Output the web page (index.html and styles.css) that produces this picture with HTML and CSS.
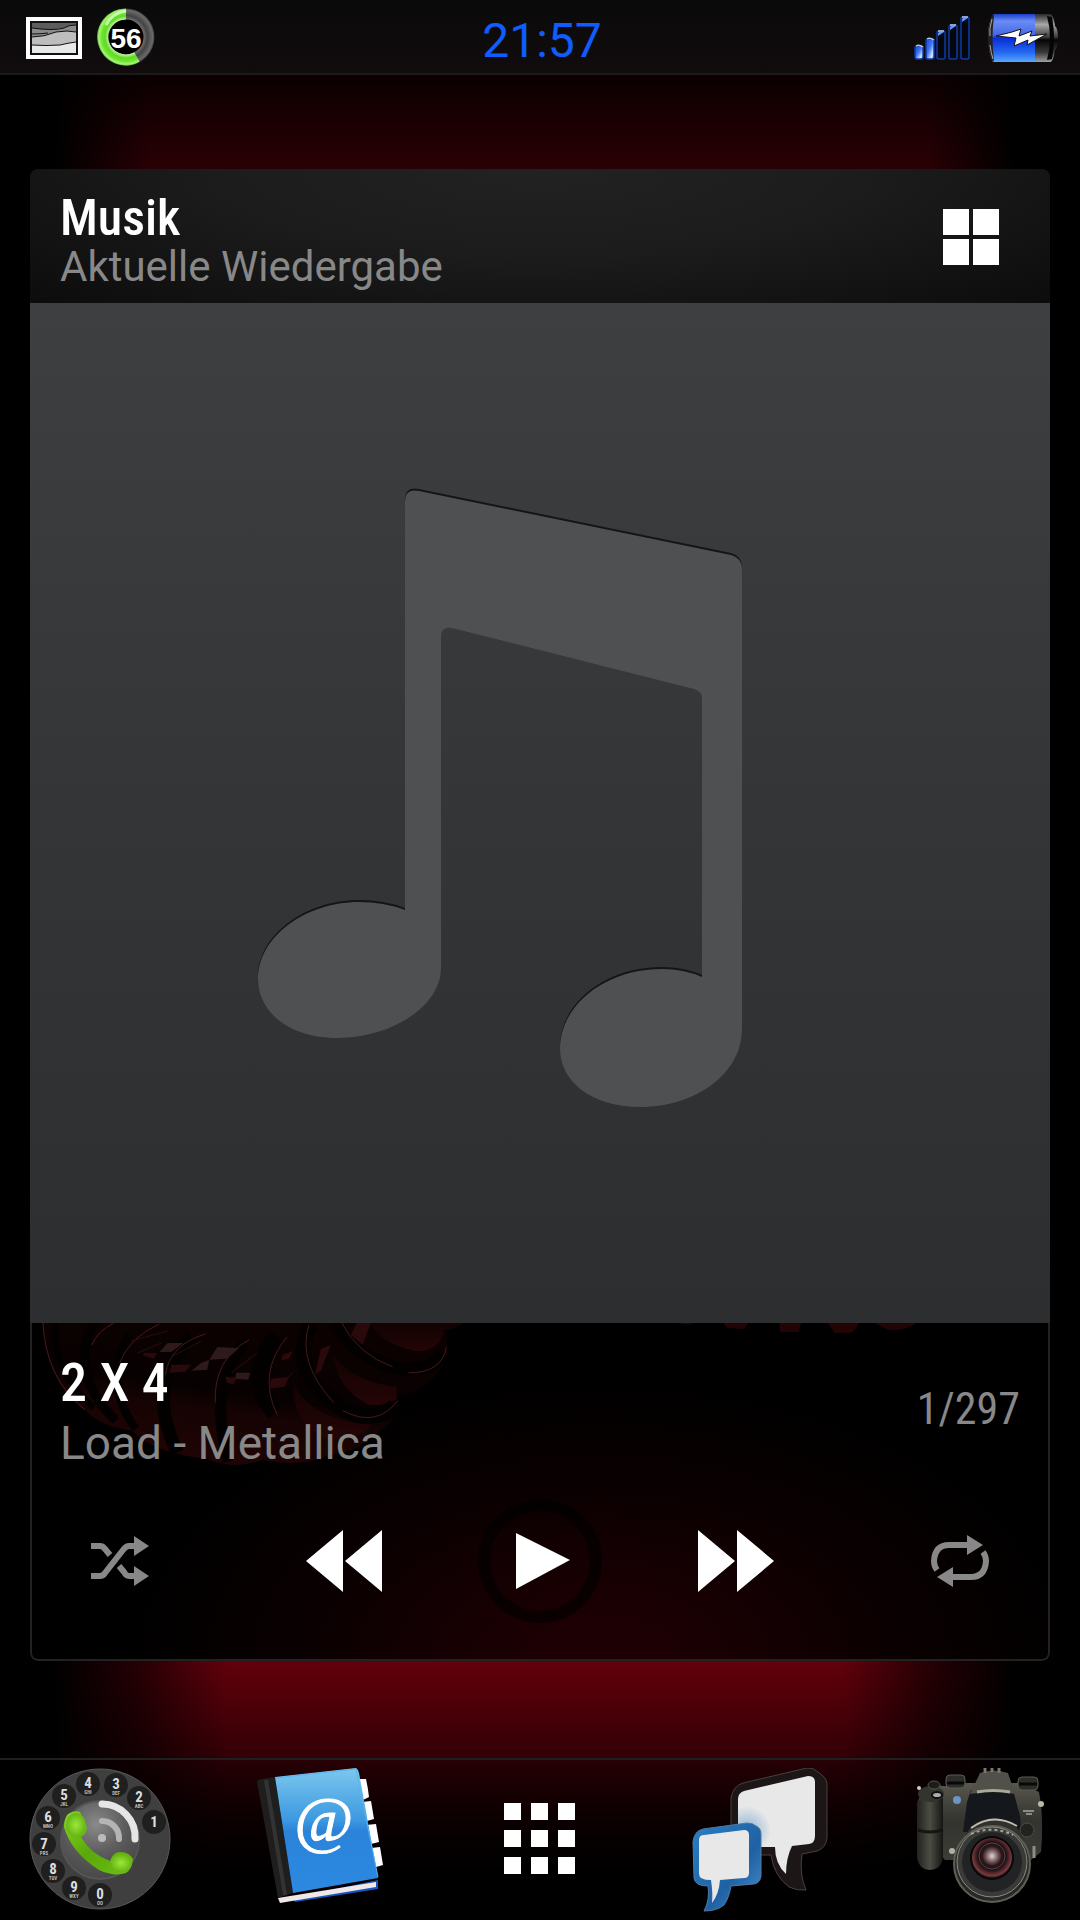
FILE: index.html
```html
<!DOCTYPE html>
<html lang="de">
<head>
    <meta charset="UTF-8">
    <meta name="viewport" content="width=device-width, initial-scale=1.0">
    <title>Musik</title>
    <link rel="stylesheet" href="styles.css">
</head>
<body>
<div class="home">
    <!-- Statusleiste -->
    <header class="status-bar">
        <div class="status-left">
            <svg class="icon-picture" width="56" height="42" viewBox="0 0 56 42">
                <rect width="56" height="42" fill="#fff"/>
                <rect x="4" y="4" width="48" height="34" fill="#111"/>
                <rect x="6" y="6" width="44" height="30" fill="#e8e8e8"/>
                <path d="M6 6H50V25Q42 26 34 28Q20 29 6 28Z" fill="#bdbdbd"/>
                <path d="M6 6H50V15Q42 13 30 15Q18 20 6 20Z" fill="#8a8a8a"/>
                <path d="M6 6H50V8Q42 8 38 11Q20 14 6 11Z" fill="#5c5c5c"/>
                <path d="M6 11Q28 14 38 11Q42 8 50 8M6 17Q14 17 22 16M6 20Q18 20 30 15Q42 13 50 15M6 28Q20 29 34 28Q42 26 50 25" fill="none" stroke="#111" stroke-width="1"/>
            </svg>
            <svg width="58" height="58" viewBox="0 0 58 58">
                <defs>
                    <radialGradient id="ringGreen" gradientUnits="userSpaceOnUse" cx="29" cy="29" r="29">
                        <stop offset=".62" stop-color="#b8f58f"/>
                        <stop offset=".72" stop-color="#63d82a"/>
                        <stop offset=".84" stop-color="#6be62c"/>
                        <stop offset=".94" stop-color="#a8f57c"/>
                        <stop offset="1" stop-color="#4c9c22"/>
                    </radialGradient>
                    <radialGradient id="ringGray" gradientUnits="userSpaceOnUse" cx="29" cy="29" r="29">
                        <stop offset=".62" stop-color="#6a6a6a"/>
                        <stop offset=".74" stop-color="#444"/>
                        <stop offset=".92" stop-color="#6a6a6a"/>
                        <stop offset="1" stop-color="#2a2a2a"/>
                    </radialGradient>
                </defs>
                <circle cx="29" cy="29" r="24" fill="#000"/>
                <circle cx="29" cy="29" r="23" fill="none" stroke="url(#ringGray)" stroke-width="11"/>
                <path d="M29 6A23 23 0 1 0 40 49" fill="none" stroke="url(#ringGreen)" stroke-width="11"/>
                <path d="M9 17Q15 5 29 3" fill="none" stroke="#e6ffd8" stroke-width="3" opacity=".7"/>
                <text x="29" y="40" text-anchor="middle" class="gauge-text">56</text>
            </svg>
        </div>
        <time class="clock">21:57</time>
        <div class="status-right">
            <svg width="56" height="44" viewBox="0 0 56 44">
                <defs>
                    <linearGradient id="barFill" x1="0" y1="0" x2="1" y2="1">
                        <stop offset="0" stop-color="#0b49e0"/>
                        <stop offset=".45" stop-color="#3a74f5"/>
                        <stop offset=".8" stop-color="#dce8ff"/>
                        <stop offset="1" stop-color="#3a74f5"/>
                    </linearGradient>
                </defs>
                <g stroke="#0d3aa8" stroke-width="1.5">
                    <rect x="1" y="30" width="8" height="13" rx="2" fill="url(#barFill)"/>
                    <rect x="12" y="23" width="8" height="20" rx="2" fill="url(#barFill)"/>
                    <rect x="23" y="15" width="8" height="28" rx="2" fill="#05070f"/>
                    <rect x="35" y="9" width="8" height="34" rx="2" fill="#05070f"/>
                    <rect x="47" y="1" width="8" height="42" rx="2" fill="#05070f"/>
                </g>
                <path d="M24 20V17Q25 15 30 16ZM36 14V11Q37 9 42 10ZM48 6V3Q49 1 54 2Z" fill="#5c95ff"/>
                <path d="M2 30Q5 28 9 31M13 23Q16 21 20 24M24 15H30M36 9H42M48 1H54" fill="none" stroke="#b9c6e4" stroke-width="1.5"/>
            </svg>
            <svg width="70" height="50" viewBox="0 0 70 50">
                <defs>
                    <linearGradient id="cellBlue" x1="0" y1="0" x2="0" y2="1">
                        <stop offset="0" stop-color="#1a3fd0"/>
                        <stop offset=".15" stop-color="#6a8cf5"/>
                        <stop offset=".44" stop-color="#4468e6"/>
                        <stop offset=".5" stop-color="#0a2ad8"/>
                        <stop offset=".8" stop-color="#2468f0"/>
                        <stop offset="1" stop-color="#58a8ff"/>
                    </linearGradient>
                    <linearGradient id="cellDark" x1="0" y1="0" x2="0" y2="1">
                        <stop offset="0" stop-color="#2a2a2a"/>
                        <stop offset=".22" stop-color="#a8a8a8"/>
                        <stop offset=".48" stop-color="#3c3c3c"/>
                        <stop offset=".54" stop-color="#050505"/>
                        <stop offset=".8" stop-color="#3a3a3a"/>
                        <stop offset="1" stop-color="#a0a0a0"/>
                    </linearGradient>
                </defs>
                <path d="M5 1H63Q66 4 67 13Q70 15 70 25Q70 35 67 37Q66 46 63 49H5Q0 40 0 25Q0 10 5 1Z" fill="url(#cellDark)"/>
                <path d="M59 3Q65 25 59 47L64 46Q68 25 64 4Z" fill="#050505"/>
                <path d="M6 1H47V49H6Q1 25 6 1Z" fill="url(#cellBlue)"/>
                <path d="M5 1Q0 10 0 25Q0 40 5 49L6 47Q3 25 6 3Z" fill="#222"/>
                <path d="M4 6Q1 16 2 23M2 32Q3 40 5 46" fill="none" stroke="#aaa" stroke-width="1"/>
                <path d="M8 23L24 19L33 16L31 23L44 18L42 23L59 21L39 32L40 27L26 33L28 25Z" fill="#fff" stroke="#111" stroke-width="1"/>
            </svg>
        </div>
    </header>

    <!-- Musik-Widget -->
    <main class="card">
        <div class="card-header">
            <div>
                <h1 class="card-title">Musik</h1>
                <p class="card-subtitle">Aktuelle Wiedergabe</p>
            </div>
            <button class="tiles-btn" aria-label="Übersicht">
                <svg width="56" height="56" viewBox="0 0 56 56" fill="#fff">
                    <path d="M0 0H26V26H0ZM30 0H56V26H30ZM0 30H26V56H0ZM30 30H56V56H30Z"/>
                </svg>
            </button>
        </div>

        <div class="artwork">
            <svg viewBox="0 0 1020 1020">
                <defs>
                    <path id="note" d="M375 607V198Q375 185 389 188L701 252Q712 255 712 266V726C712 771 665 804 610 804C560 804 530 777 530 746C530 702 575 666 632 666Q654 666 672 674V396Q672 388 664 386L422 325Q411 323 411 334V665C411 703 362 735 307 735C258 735 228 708 228 676C228 634 275 599 329 599Q354 599 375 607Z"/>
                </defs>
                <use href="#note" y="-2" fill="#151516"/>
                <use href="#note" fill="#4f5052"/>
            </svg>
        </div>

        <div class="player">
            <!-- Wallpaper, das durch das Widget scheint -->
            <svg class="player-bg" viewBox="0 0 1020 338" preserveAspectRatio="xMidYMin slice">
                <defs>
                    <linearGradient id="coil" gradientUnits="userSpaceOnUse" x1="210" y1="0" x2="190" y2="145">
                        <stop offset="0" stop-color="#0c0101"/>
                        <stop offset=".48" stop-color="#080101"/>
                        <stop offset=".62" stop-color="#160303"/>
                        <stop offset="1" stop-color="#200405"/>
                    </linearGradient>
                    <linearGradient id="coilEnd" x1="0" y1="0" x2="0" y2="1">
                        <stop offset="0" stop-color="#120202"/>
                        <stop offset="1" stop-color="#240506"/>
                    </linearGradient>
                </defs>
                <path d="M11 0Q12 60 53 87Q68 104 100 108Q120 130 177 137Q205 148 232 137Q268 146 300 132Q328 130 346 110Q370 98 368 74Q400 68 414 40Q420 18 414 7Q424 6 433 0Z" fill="url(#coil)"/>
                <path d="M340 0H433Q424 7 414 7Q408 30 384 28Q350 20 340 0Z" fill="url(#coilEnd)"/>
                <path d="M302 30Q318 58 366 64L366 76Q354 84 338 82Q306 66 302 30Z" fill="url(#coilEnd)"/>
                <path d="M262 60Q280 98 340 102Q330 118 296 116Q262 104 262 60Z" fill="url(#coilEnd)"/>
                <g fill="none" stroke="#030000">
                    <path d="M24 0Q18 45 62 85" stroke-width="6"/>
                    <path d="M62 0Q36 50 84 98" stroke-width="9"/>
                    <path d="M98 12Q70 60 104 106" stroke-width="8"/>
                    <path d="M160 14Q112 60 146 130" stroke-width="13"/>
                    <path d="M214 20Q176 62 197 139" stroke-width="11"/>
                    <path d="M246 14Q212 54 244 90" stroke-width="17"/>
                    <path d="M280 2Q258 44 300 78Q334 106 364 84" stroke-width="15"/>
                    <path d="M304 0Q330 40 372 46Q404 48 412 30" stroke-width="13"/>
                </g>
                <g fill="none" stroke="#48191b" stroke-width="1">
                    <path d="M11 0Q14 56 53 87M60 22Q66 8 82 0M88 40Q98 14 128 1M134 52Q138 22 174 11M184 80Q182 36 218 17M246 92Q226 50 256 14M278 2Q266 40 303 80M312 88Q346 106 367 78M311 0Q328 32 362 44M378 50Q412 50 416 24"/>
                    <path d="M100 18L136 8M106 30L130 20M140 34L170 18M200 50L226 30M248 62L262 50" stroke="#2c0c0d"/>
                </g>
                <g fill="#2e1a1b">
                    <path d="M136 20L152 20L140 29L128 29Z"/>
                    <path d="M186 24L208 25L196 36L178 37Z"/>
                    <path d="M170 40L178 37L176 47L160 48Z"/>
                    <path d="M205 50L219 50L217 57L204 56Z"/>
                </g>
                <g fill="#2a090b">
                    <path d="M112 30L126 30L122 36L112 33Z"/>
                    <path d="M140 42L160 42L154 49L138 50Z"/>
                    <path d="M194 54L206 55L202 62L196 60Z"/>
                    <path d="M240 56L258 54L254 64L238 66Z"/>
                    <path d="M252 32L262 28L258 36L250 38Z"/>
                    <path d="M290 26L300 22L290 48L284 52Z"/>
                    <path d="M326 0H340L332 22L320 12Z"/>
                </g>
                <path d="M648 0H665Q658 3 648 0ZM694 0H719L715 6L698 5ZM750 0H772L770 9H751ZM799 0H830Q826 10 820 10H806ZM846 0H887Q878 8 860 7Z" fill="#220405"/>
            </svg>

            <div class="track">
                <div>
                    <h2 class="track-title">2 X 4</h2>
                    <p class="track-artist">Load - Metallica</p>
                </div>
                <span class="track-count">1/297</span>
            </div>

            <div class="controls">
                <button aria-label="Zufallswiedergabe">
                    <svg width="58" height="50" viewBox="0 0 58 50">
                        <g fill="none" stroke="#888" stroke-width="6">
                            <path d="M0 40H9Q12 40 14 37L32 14Q35 10 38 10H45"/>
                            <path d="M0 10H9Q12 10 14 13L19 19"/>
                            <path d="M28 30L33 36Q35 40 38 40H45"/>
                        </g>
                        <path d="M43 0L58 10L43 20ZM43 30L58 40L43 50Z" fill="#888"/>
                    </svg>
                </button>
                <div class="controls-main">
                    <button aria-label="Zurück">
                        <svg width="76" height="62" viewBox="0 0 76 62" fill="#fff"><path d="M0 31L37 0V62ZM39 31L76 0V62Z"/></svg>
                    </button>
                    <button class="play-btn" aria-label="Wiedergabe">
                        <svg width="60" height="56" viewBox="0 0 60 56" fill="#fff"><path d="M6 0L60 27L6 56Z"/></svg>
                    </button>
                    <button aria-label="Weiter">
                        <svg width="76" height="62" viewBox="0 0 76 62" fill="#fff"><path d="M0 0L37 31L0 62ZM39 0L76 31L39 62Z"/></svg>
                    </button>
                </div>
                <button aria-label="Wiederholen">
                    <svg width="58" height="52" viewBox="0 0 58 52">
                        <g fill="none" stroke="#888" stroke-width="6">
                            <path d="M6 35Q3 31 3 26Q4 10 18 10H38"/>
                            <path d="M52 17Q55 21 55 26Q54 42 40 42H20"/>
                        </g>
                        <path d="M36 0L52 10L36 20ZM22 32L6 42L22 52Z" fill="#888"/>
                    </svg>
                </button>
            </div>
        </div>
    </main>

    <!-- Dock -->
    <nav class="dock">
        <a href="#" aria-label="Telefon">
            <svg width="142" height="142" viewBox="0 0 142 142">
                <defs>
                    <radialGradient id="hub" cx=".45" cy=".3" r=".75">
                        <stop offset="0" stop-color="#8a8a8a"/>
                        <stop offset=".5" stop-color="#5c5c5c"/>
                        <stop offset="1" stop-color="#444"/>
                    </radialGradient>
                    <linearGradient id="handset" x1="0" y1="0" x2="1" y2="1">
                        <stop offset="0" stop-color="#86d81e"/>
                        <stop offset=".5" stop-color="#5aa80c"/>
                        <stop offset="1" stop-color="#6cc010"/>
                    </linearGradient>
                    <radialGradient id="knob">
                        <stop offset="0" stop-color="#9be83a"/>
                        <stop offset="1" stop-color="#66b414"/>
                    </radialGradient>
                </defs>
                <circle cx="71" cy="71" r="70" fill="#3f3f3f" stroke="#585858" stroke-width="1"/>
                <g fill="#1f1f1f">
                    <circle cx="125" cy="54" r="12"/><circle cx="110" cy="30" r="12"/>
                    <circle cx="87" cy="17" r="12"/><circle cx="59" cy="16" r="12"/>
                    <circle cx="35" cy="28" r="12"/><circle cx="19" cy="50" r="12"/>
                    <circle cx="15" cy="76" r="12"/><circle cx="24" cy="103" r="12"/>
                    <circle cx="45" cy="120" r="12"/><circle cx="71" cy="127" r="12"/>
                </g>
                <g class="dial-num">
                    <text x="125" y="59">1</text><text x="110" y="34">2</text>
                    <text x="87" y="21">3</text><text x="59" y="20">4</text>
                    <text x="35" y="32">5</text><text x="19" y="54">6</text>
                    <text x="15" y="81">7</text><text x="24" y="106">8</text>
                    <text x="45" y="124">9</text><text x="71" y="131">0</text>
                </g>
                <g class="dial-sub">
                    <text x="110" y="40">ABC</text><text x="87" y="27">DEF</text>
                    <text x="59" y="26">GHI</text><text x="35" y="38">JKL</text>
                    <text x="19" y="60">MNO</text><text x="15" y="87">PRS</text>
                    <text x="24" y="112">TUV</text><text x="45" y="130">WXY</text>
                    <text x="71" y="137">OO</text>
                </g>
                <circle cx="71" cy="72" r="39" fill="url(#hub)" stroke="#555" stroke-width="2"/>
                <circle cx="73" cy="70" r="4" fill="#bbb"/>
                <path d="M73 53A17 17 0 0 1 90 71" fill="none" stroke="#b4b4b4" stroke-width="6" stroke-linecap="round"/>
                <path d="M73 36A33 33 0 0 1 106 71" fill="none" stroke="#e6e6e6" stroke-width="7" stroke-linecap="round"/>
                <path d="M39 46Q45 42 51 44L58 59Q58 66 52 69Q62 86 81 93Q84 84 91 84Q100 84 104 91Q103 101 97 105Q85 109 70 102Q42 84 35 59Q35 50 39 46Z" fill="url(#handset)"/>
                <ellipse cx="47" cy="57" rx="10" ry="12" fill="url(#knob)"/>
                <ellipse cx="92" cy="95" rx="11" ry="9" fill="url(#knob)"/>
            </svg>
        </a>
        <a href="#" aria-label="Kontakte">
            <svg width="142" height="142" viewBox="0 0 142 142">
                <defs>
                    <linearGradient id="cover" x1="0" y1="0" x2="0" y2="1">
                        <stop offset="0" stop-color="#7cc8ee"/>
                        <stop offset=".42" stop-color="#3c98e0"/>
                        <stop offset=".5" stop-color="#2b84da"/>
                        <stop offset="1" stop-color="#2c88e0"/>
                    </linearGradient>
                </defs>
                <path d="M108 11L117 11Q119 20 120 29L114 32ZM113 34L122 33L125 51L118 53ZM117 57L127 56L130 74L122 76ZM122 80L131 79L134 97L127 99Z" fill="#fff"/>
                <path d="M44 130L129 112V121L46 134Z" fill="#1556c4"/>
                <path d="M29 130L127 114V119L31 135Z" fill="#f0e8e6"/>
                <path d="M8 14Q9 11 13 11L26 9L44 125L29 130Z" fill="#1e1e1e"/>
                <path d="M17 12L36 127" stroke="#333" stroke-width="4"/>
                <path d="M26 9L107 0Q109 1 110 5L129 110L44 125Z" fill="url(#cover)"/>
                <path d="M27 10L107 1L129 109" fill="none" stroke="#5cb4f0" stroke-width="1"/>
                <text x="75" y="73" text-anchor="middle" class="book-at">@</text>
            </svg>
        </a>
        <a href="#" aria-label="Alle Apps">
            <svg width="142" height="142" viewBox="0 0 142 142" fill="#fff">
                <path d="M35 35h17v17h-17zM62 35h17v17h-17zM89 35h17v17h-17zM35 62h17v17h-17zM62 62h17v17h-17zM89 62h17v17h-17zM35 89h17v17h-17zM62 89h17v17h-17zM89 89h17v17h-17z"/>
            </svg>
        </a>
        <a href="#" aria-label="Nachrichten">
            <svg width="142" height="144" viewBox="0 0 142 144">
                <defs>
                    <linearGradient id="bubbleBlue" x1="0" y1="0" x2="1" y2="1">
                        <stop offset="0" stop-color="#2a7ec4"/>
                        <stop offset=".6" stop-color="#1f62a4"/>
                        <stop offset="1" stop-color="#4a90d0"/>
                    </linearGradient>
                    <radialGradient id="bubbleShade" gradientUnits="userSpaceOnUse" cx="58" cy="62" r="24">
                        <stop offset="0" stop-color="#8cb4d4"/>
                        <stop offset="1" stop-color="#e8e8e8"/>
                    </radialGradient>
                </defs>
                <path d="M42 30Q44 18 54 15L118 0Q124 -1 129 4Q138 10 138 16V70Q137 80 128 83L113 86Q110 106 117 122Q108 123 100 119Q85 108 82 87H66L42 60Z" fill="#1d1617" stroke="#4a3f40" stroke-width="1"/>
                <path d="M49 31Q49 25 55 23L119 8Q126 8 126 14V68Q126 75 120 76L103 78Q97 90 97 106Q86 96 86 79H66L49 60Z" fill="url(#bubbleShade)"/>
                <path d="M4 74Q5 63 14 61L58 55Q64 55 67 58Q72 60 72 66V108Q71 115 65 116L42 118Q40 130 35 137Q28 143 15 143Q21 132 19 118Q6 118 5 110Z" fill="url(#bubbleBlue)" stroke="#4b7aa2" stroke-width="1"/>
                <path d="M10 72Q10 67 15 67L55 62Q60 62 60 67V105Q60 110 55 110L31 112Q30 126 23 135Q24 126 22 112Q10 112 10 106Z" fill="#e8e8e8"/>
            </svg>
        </a>
        <a href="#" aria-label="Kamera">
            <svg width="142" height="142" viewBox="0 0 142 142">
                <defs>
                    <linearGradient id="body" x1="0" y1="0" x2="0" y2="1">
                        <stop offset="0" stop-color="#57574e"/>
                        <stop offset=".5" stop-color="#33332f"/>
                        <stop offset="1" stop-color="#3d3d37"/>
                    </linearGradient>
                    <linearGradient id="grip" x1="0" y1="0" x2="1" y2="0">
                        <stop offset="0" stop-color="#22221f"/>
                        <stop offset=".5" stop-color="#4c4c44"/>
                        <stop offset="1" stop-color="#151513"/>
                    </linearGradient>
                    <radialGradient id="glass" cx=".5" cy=".45" r=".55">
                        <stop offset="0" stop-color="#d6ded6"/>
                        <stop offset=".2" stop-color="#94747a"/>
                        <stop offset=".45" stop-color="#2a1518"/>
                        <stop offset=".65" stop-color="#241114"/>
                        <stop offset=".9" stop-color="#7a3a40"/>
                        <stop offset="1" stop-color="#101010"/>
                    </radialGradient>
                </defs>
                <path d="M8 36Q14 16 36 18L56 15H112L130 24Q135 50 132 84L122 92H36L8 60Z" fill="url(#body)"/>
                <path d="M8 34Q20 22 34 30V90Q32 102 20 102Q10 101 8 90Z" fill="url(#grip)"/>
                <path d="M9 62Q20 66 34 62" fill="none" stroke="#151513" stroke-width="3"/>
                <ellipse cx="22" cy="26" rx="13" ry="8" fill="#34342f"/>
                <ellipse cx="25" cy="17" rx="6" ry="4" fill="#1c1c1a" stroke="#56564e"/>
                <ellipse cx="28" cy="27" rx="5" ry="3" fill="#a8b0a8" stroke="#111" stroke-width="2"/>
                <rect x="37" y="7" width="19" height="13" rx="4" fill="#2c2c28" stroke="#5b5b52"/>
                <path d="M38 15H55" stroke="#080808" stroke-width="3"/>
                <rect x="109" y="9" width="20" height="13" rx="4" fill="#2c2c28" stroke="#5b5b52"/>
                <path d="M110 16H128" stroke="#080808" stroke-width="3"/>
                <path d="M62 22H104L111 48L112 64H54L58 34Z" fill="#14171c"/>
                <path d="M61 26L71 5Q84 0 99 5L106 26Q84 22 61 26Z" fill="#515149"/>
                <path d="M76 0V5M83 0V4M90 0V5" stroke="#77776b" stroke-width="3"/>
                <path d="M68 24Q84 21 101 24" fill="none" stroke="#aaa99a" stroke-width="3"/>
                <circle cx="48" cy="32" r="4" fill="#6c94c4"/>
                <path d="M114 43H125M117 46H123" stroke="#8b8b86" stroke-width="2"/>
                <circle cx="10" cy="20" r="2" fill="#ccc"/>
                <circle cx="132" cy="36" r="3" fill="#b8b8a8"/>
                <circle cx="43" cy="83" r="3" fill="#b0b0a2"/>
                <circle cx="118" cy="62" r="7" fill="#22221f" stroke="#4e4e46"/>
                <path d="M125 78V90" stroke="#8d8d80" stroke-width="3"/>
                <path d="M55 78Q56 52 85 50Q112 52 116 78L104 98H62Z" fill="#30302c"/>
                <path d="M62 60Q84 44 108 58" fill="none" stroke="#bdbcae" stroke-width="2"/>
                <circle cx="83" cy="96" r="38" fill="#282826" stroke="#5f5f58" stroke-width="2"/>
                <circle cx="83" cy="94" r="35" fill="#3a3b39" stroke="#8b8b80" stroke-width="1"/>
                <path d="M62 66Q83 57 104 67" fill="none" stroke="#a3a295" stroke-width="2" stroke-dasharray="3 3"/>
                <circle cx="83" cy="94" r="30" fill="#222325"/>
                <circle cx="83" cy="90" r="22" fill="#080808"/>
                <circle cx="83" cy="90" r="20" fill="url(#glass)"/>
                <circle cx="83" cy="88" r="13" fill="none" stroke="#46474a" stroke-width="1"/>
            </svg>
        </a>
    </nav>
</div>
</body>
</html>
```

FILE: styles.css
```css
:root {
    --gray: #888;
    --line: #222;
    --condensed: "Roboto Condensed", "Liberation Sans Narrow", Roboto, sans-serif;
}

* { box-sizing: border-box; }

body {
    margin: 0;
    background: #000;
    color: #fff;
    font-family: Roboto, sans-serif;
}

h1, h2, p { margin: 0; }

button {
    padding: 0;
    border: none;
    background: none;
    cursor: pointer;
}

svg { display: block; }

.home {
    display: flex;
    flex-direction: column;
    min-height: 100vh;
    background:
        linear-gradient(to right, #000 5%, transparent 14%, transparent 86%, #000 94%) top / 100% 50% no-repeat,
        linear-gradient(to right, #000 5%, rgba(0, 0, 0, 0.6) 13%, transparent 21%, transparent 78%, rgba(0, 0, 0, 0.6) 86%, #000 94%) bottom / 100% 50% no-repeat,
        linear-gradient(#0a0001 70px, #2a0005 170px, #2a0005 50%, transparent 50%) no-repeat,
        linear-gradient(to top, #000 30px, #330006 166px, #62000b 258px);
}

/* Statusleiste */
.status-bar {
    display: grid;
    grid-template-columns: 1fr auto 1fr;
    align-items: center;
    height: 75px;
    padding: 0 22px 0 26px;
    background: linear-gradient(#0a0a0a, #110c0d);
    border-bottom: 2px solid #1c1a1a;
}

.status-left,
.status-right {
    display: flex;
    align-items: center;
    gap: 15px;
}

.icon-picture { margin-top: 3px; }

.status-right {
    justify-content: flex-end;
    gap: 18px;
    padding-top: 3px;
}

.clock {
    color: #0f5cff;
    font-size: 48px;
    line-height: 56px;
    padding-top: 8px;
}

.gauge-text {
    font: bold 28px "Liberation Sans", sans-serif;
    fill: #fff;
}

/* Musik-Widget */
.card {
    margin: 94px 30px 0;
    border-radius: 8px;
    overflow: hidden;
}

.card-header {
    display: flex;
    justify-content: space-between;
    height: 134px;
    padding: 25px 51px 0 30px;
    background: radial-gradient(ellipse at 50% 0, #222 0, #1c1c1c 45%, #0c0c0c 100%);
}

.card-title {
    font: 500 50px/48px var(--condensed);
}

.card-subtitle {
    color: var(--gray);
    font-size: 42px;
    line-height: 50px;
}

.tiles-btn {
    align-self: flex-start;
    margin-top: 15px;
}

.artwork {
    aspect-ratio: 1;
    background: linear-gradient(#3e3f41, #343537 50%, #2d2e30);
}

.player {
    position: relative;
    padding: 30px 28px 36px;
    border: 2px solid var(--line);
    border-top: none;
    border-radius: 0 0 8px 8px;
    background: radial-gradient(ellipse 48% 85% at 56% 100%, #1c0003 15%, #0a0001 62%, #000 100%);
}

.player-bg {
    position: absolute;
    inset: 0;
    width: 100%;
    height: 100%;
}

.track,
.controls {
    position: relative;
    display: flex;
    justify-content: space-between;
}

.track-title {
    font: 500 54px/60px var(--condensed);
}

.track-artist {
    color: var(--gray);
    font-size: 46px;
    line-height: 60px;
}

.track-count {
    color: var(--gray);
    font: 400 44px/60px var(--condensed);
    padding-top: 26px;
}

.controls {
    align-items: center;
    margin-top: 26px;
    padding: 0 31px;
}

.controls-main {
    display: flex;
    align-items: center;
    gap: 96px;
}

.play-btn {
    display: flex;
    align-items: center;
    justify-content: center;
    width: 124px;
    height: 124px;
    border: 12px solid rgba(0, 0, 0, 0.6);
    border-radius: 50%;
}

/* Dock */
.dock {
    display: flex;
    justify-content: space-between;
    height: 162px;
    margin-top: auto;
    padding: 8px 29px;
    border-top: 2px solid rgba(255, 255, 255, 0.12);
    background: linear-gradient(rgba(0, 0, 0, 0.2), #000 85%);
}

.dial-num text {
    font: bold 15px var(--condensed);
    fill: #ddd;
    text-anchor: middle;
}

.dial-sub text {
    font: bold 5px var(--condensed);
    fill: #bbb;
    text-anchor: middle;
}

.book-at {
    font: 64px "Liberation Serif", serif;
    fill: #fff;
    stroke: #fff;
}
```
